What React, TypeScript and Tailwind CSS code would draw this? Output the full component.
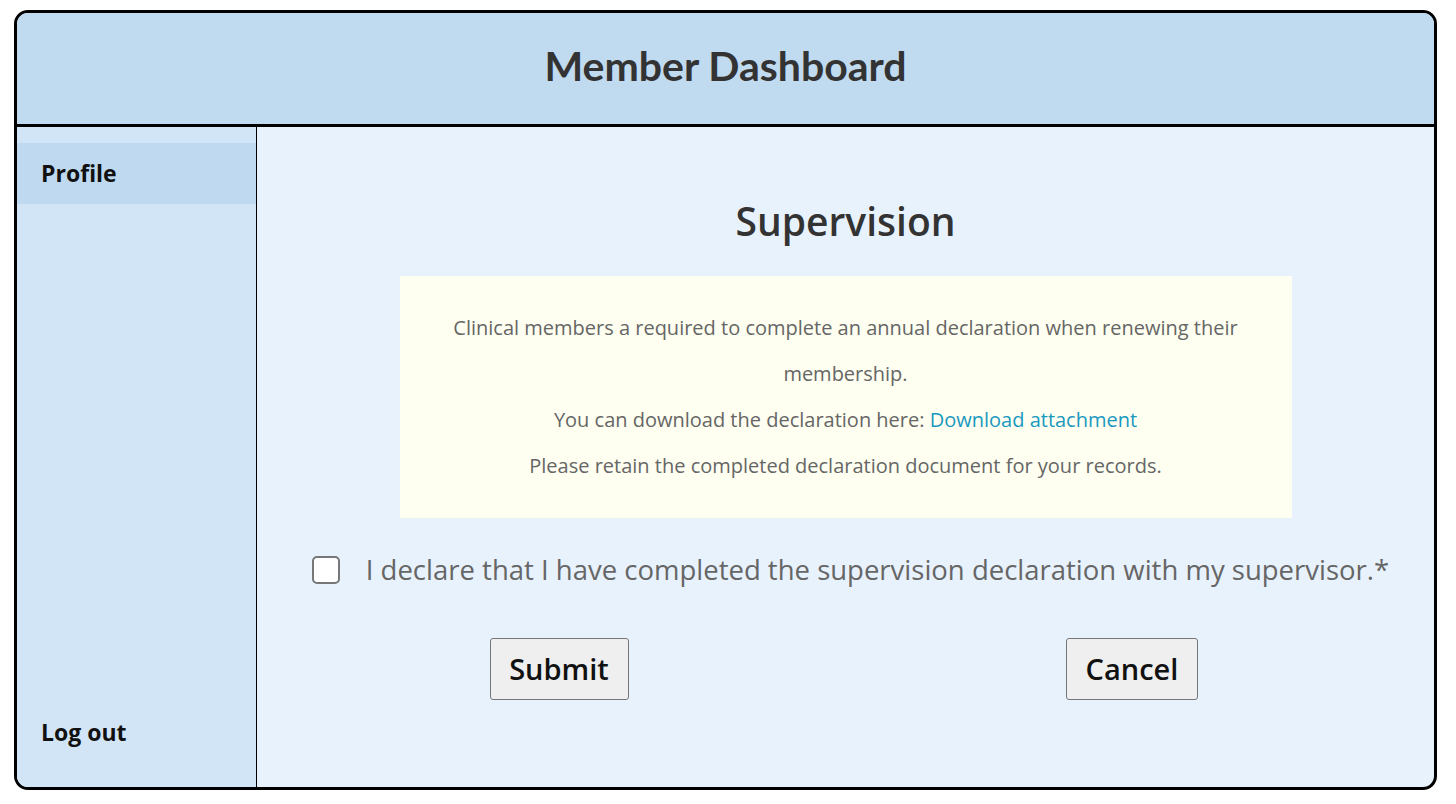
import React, { useState } from 'react'

const navItems = [
  { id: 'profile', label: 'Profile' },
]

export default function App() {
  const [agreed, setAgreed] = useState(false)
  const [active] = useState('profile')

  return (
    <div className="min-h-screen bg-white pt-[10px] pl-[14px] font-['Open_Sans',sans-serif]">
      <div className="w-[1423px] h-[780px] border-[3px] border-black rounded-[14px] overflow-hidden flex flex-col bg-[#e8f2fc]">
        {/* header */}
        <header className="h-[114px] shrink-0 bg-[#c0daf0] border-b-[3px] border-black flex items-center justify-center">
          <h1 className="text-[41px] leading-[48px] font-bold text-[#333] font-['Lato',sans-serif] -mt-[6px]">
            Member Dashboard
          </h1>
        </header>

        <div className="flex flex-1 min-h-0">
          {/* sidebar */}
          <aside className="w-[240px] shrink-0 bg-[#d2e5f7] border-r border-black flex flex-col pt-[16px] pb-[24px]">
            {navItems.map(item => (
              <div
                key={item.id}
                className={`h-[61px] flex items-center pl-[24px] text-[23px] font-bold text-[#111] ${
                  active === item.id ? 'bg-[#bfd9f1]' : ''
                }`}
              >
                {item.label}
              </div>
            ))}
            <div className="mt-auto h-[61px] flex items-center pl-[24px] text-[23px] font-bold text-[#111]">
              Log out
            </div>
          </aside>

          {/* main content */}
          <main className="flex-1 flex flex-col items-center pt-[72px]">
            <h2 className="text-[39px] font-semibold text-[#333] leading-[44px]">Supervision</h2>

            <div className="mt-[33px] w-[892px] bg-[#fefff0] px-[50px] py-[29px] text-center text-[20px] leading-[46px] text-[#666]">
              <p>Clinical members a required to complete an annual declaration when renewing their membership.</p>
              <p>
                You can download the declaration here:{' '}
                <a href="#" className="text-[#1b98c0]">Download attachment</a>
              </p>
              <p>Please retain the completed declaration document for your records.</p>
            </div>

            <label className="mt-[34px] flex items-center gap-[26px] cursor-pointer ml-[10px]">
              <input
                type="checkbox"
                checked={agreed}
                onChange={e => setAgreed(e.target.checked)}
                className="appearance-none w-[28px] h-[28px] rounded-[5px] border-2 border-[#777] bg-white checked:bg-[#1b98c0]"
              />
              <span className="text-[27.5px] leading-[36px] text-[#666]">
                I declare that I have completed the supervision declaration with my supervisor.*
              </span>
            </label>

            <div className="mt-[50px] w-[1146px] grid grid-cols-2">
              <div className="flex justify-center">
                <button className="w-[139px] h-[62px] bg-[#efefef] border border-[#767676] rounded-[3px] text-[29px] font-semibold text-[#111]">
                  Submit
                </button>
              </div>
              <div className="flex justify-center">
                <button className="w-[132px] h-[62px] bg-[#efefef] border border-[#767676] rounded-[3px] text-[29px] font-semibold text-[#111]">
                  Cancel
                </button>
              </div>
            </div>
          </main>
        </div>
      </div>
    </div>
  )
}
